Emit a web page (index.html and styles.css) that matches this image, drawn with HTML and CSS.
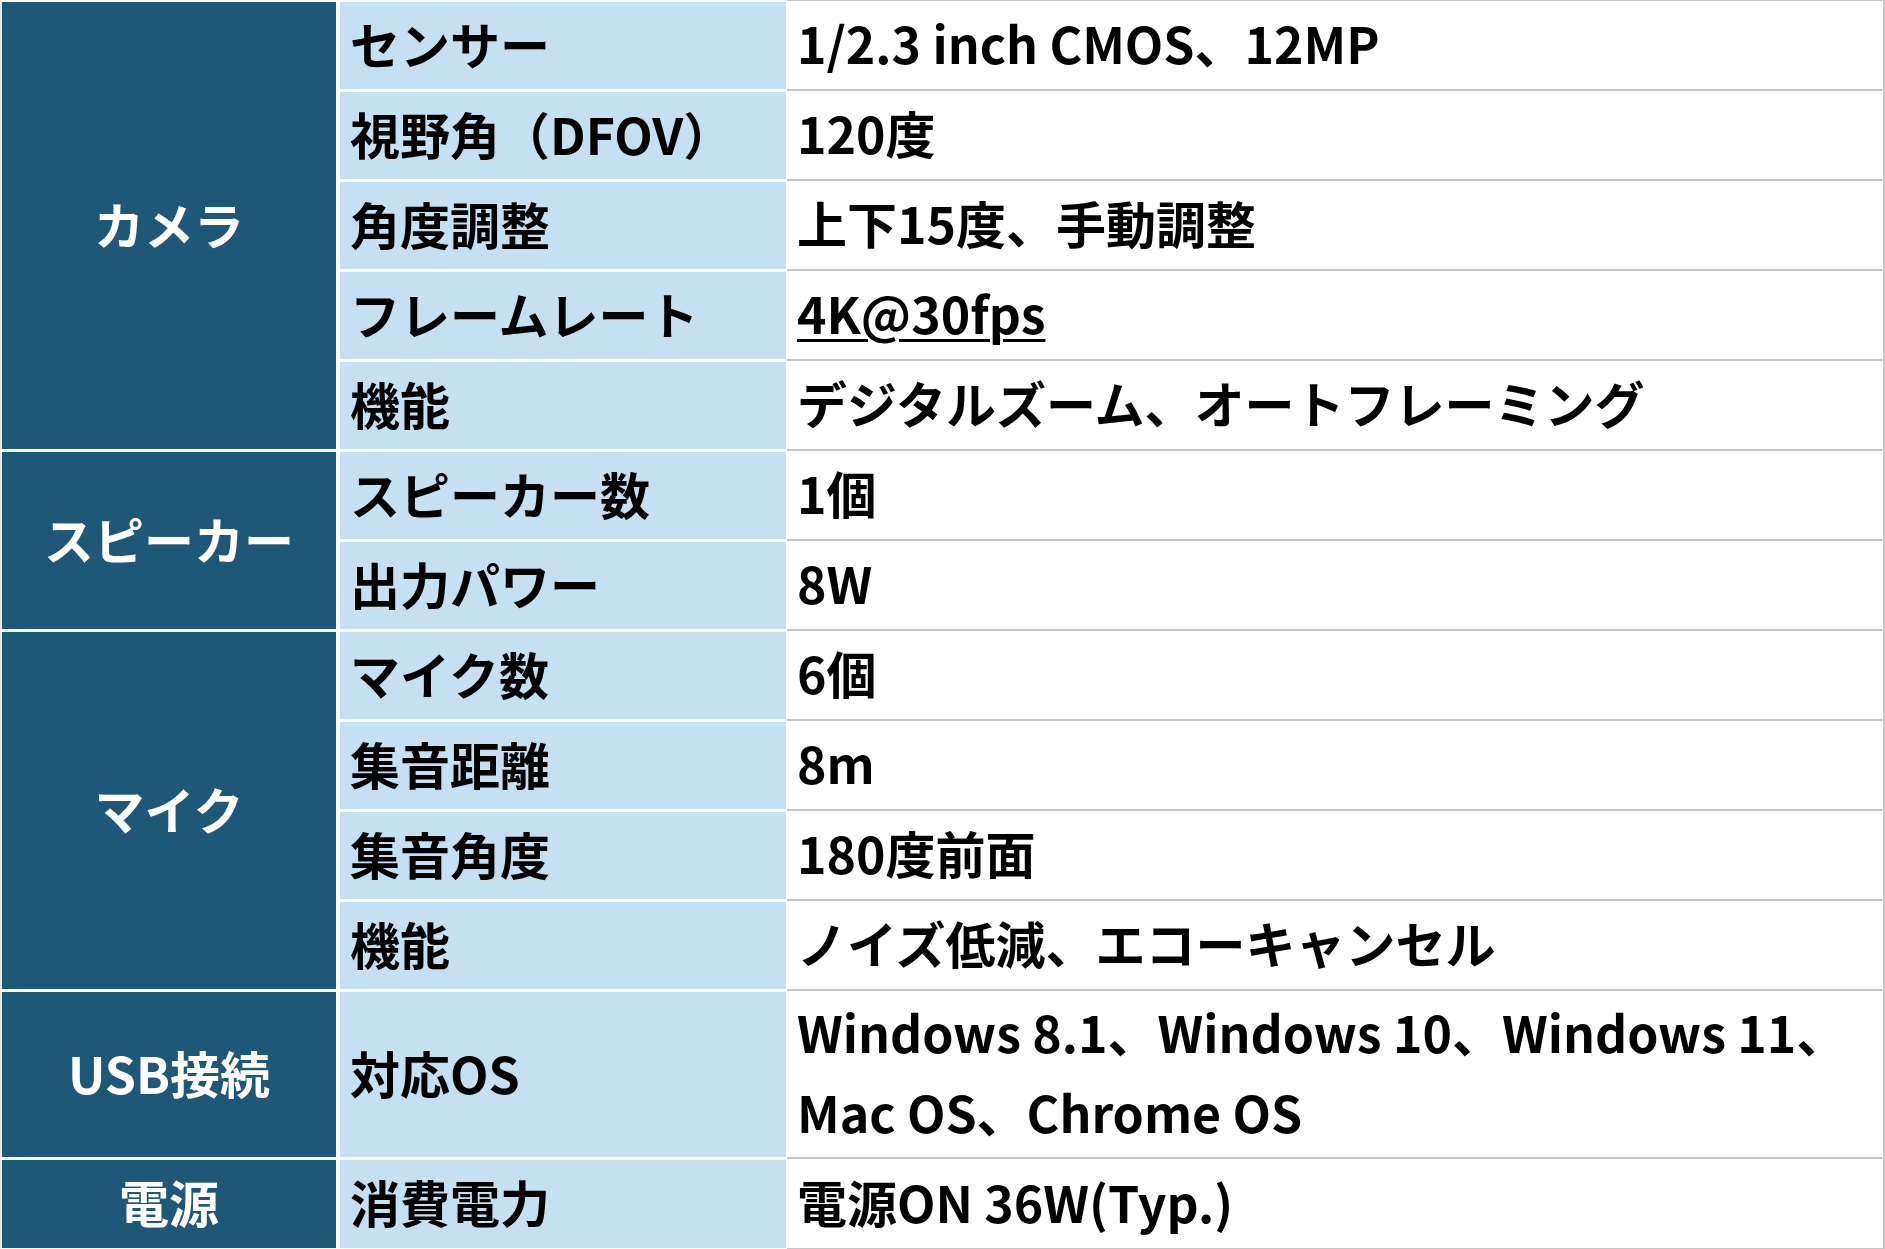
FILE: index.html
```html
<!DOCTYPE html>
<html lang="ja">
<head>
<meta charset="utf-8">
<title>仕様</title>
<link rel="stylesheet" href="styles.css">
</head>
<body>
<table class="spec">
  <colgroup>
    <col class="c-cat">
    <col class="c-key">
    <col class="c-val">
  </colgroup>
  <tbody>
    <tr class="row">
      <td class="cat" rowspan="5">カメラ</td>
      <td class="key">センサー</td>
      <td class="val">1/2.3 inch CMOS、12MP</td>
    </tr>
    <tr class="row">
      <td class="key">視野角（DFOV）</td>
      <td class="val">120度</td>
    </tr>
    <tr class="row">
      <td class="key">角度調整</td>
      <td class="val">上下15度、手動調整</td>
    </tr>
    <tr class="row">
      <td class="key">フレームレート</td>
      <td class="val"><a class="link" href="#">4K@30fps</a></td>
    </tr>
    <tr class="row">
      <td class="key">機能</td>
      <td class="val">デジタルズーム、オートフレーミング</td>
    </tr>
    <tr class="row">
      <td class="cat" rowspan="2">スピーカー</td>
      <td class="key">スピーカー数</td>
      <td class="val">1個</td>
    </tr>
    <tr class="row">
      <td class="key">出力パワー</td>
      <td class="val">8W</td>
    </tr>
    <tr class="row">
      <td class="cat" rowspan="4">マイク</td>
      <td class="key">マイク数</td>
      <td class="val">6個</td>
    </tr>
    <tr class="row">
      <td class="key">集音距離</td>
      <td class="val">8m</td>
    </tr>
    <tr class="row">
      <td class="key">集音角度</td>
      <td class="val">180度前面</td>
    </tr>
    <tr class="row">
      <td class="key">機能</td>
      <td class="val">ノイズ低減、エコーキャンセル</td>
    </tr>
    <tr class="row-tall">
      <td class="cat">USB接続</td>
      <td class="key">対応OS</td>
      <td class="val">Windows 8.1、Windows 10、Windows 11、<br>Mac OS、Chrome OS</td>
    </tr>
    <tr class="row-last">
      <td class="cat">電源</td>
      <td class="key">消費電力</td>
      <td class="val">電源ON 36W(Typ.)</td>
    </tr>
  </tbody>
</table>
</body>
</html>
```

FILE: styles.css
```css
html, body {
  margin: 0;
  padding: 0;
  background: #ffffff;
}

.spec {
  border-collapse: separate;
  border-spacing: 0;
  table-layout: fixed;
  width: 1885px;
  font-family: "Noto Sans CJK JP", "Noto Sans", sans-serif;
  font-weight: 700;
  font-size: 50px;
  color: #000;
}

.c-cat { width: 338px; }
.c-key { width: 449px; }
.c-val { width: auto; }

.row { height: 90px; }
.row-tall { height: 165px; }
.row-last { height: 91px; }

.spec td {
  padding: 0 10px 6px;
  vertical-align: middle;
  line-height: 80px;
  white-space: nowrap;
}

.cat {
  background: #1f5778;
  color: #ffffff;
  text-align: center;
  border-top: 2px solid #ffffff;
  border-bottom: 1px solid #ffffff;
  border-left: 2px solid #e8e8e8;
  border-right: 2px solid #ffffff;
}

.key {
  background: #c5e0f1;
  border-top: 2px solid #ffffff;
  border-bottom: 1px solid #ffffff;
  border-left: 2px solid #ffffff;
  border-right: 1px solid #ffffff;
  padding-left: 8px;
}

.val {
  background: #ffffff;
  border-top: 1px solid #c6c6c6;
  border-bottom: 1px solid #c6c6c6;
  border-right: 2px solid #c6c6c6;
  padding-left: 6px;
}

.link {
  color: #000;
  text-decoration: underline;
  text-decoration-thickness: 3px;
  text-underline-offset: 5px;
}
```
